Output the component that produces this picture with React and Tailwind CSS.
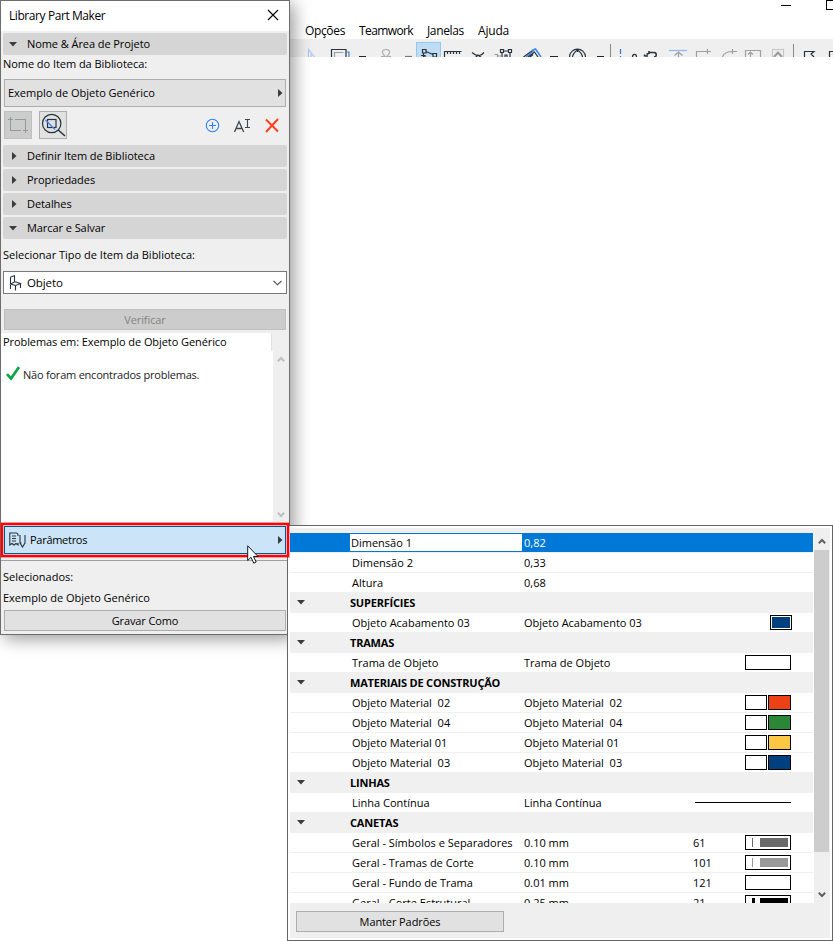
import React from "react";

const TriRight = ({ className = "" }) => (
  <svg width="5" height="8" viewBox="0 0 5 8" className={className}>
    <path d="M0 0 L4.5 4 L0 8 Z" fill="#3c3c3c" />
  </svg>
);

const TriDown = ({ className = "" }) => (
  <svg width="8" height="5" viewBox="0 0 8 5" className={className}>
    <path d="M0 0 H8 L4 4.5 Z" fill="#3c3c3c" />
  </svg>
);

const Chevron = ({ up, color }) => (
  <svg width="8" height="7" viewBox="0 0 8 7" className="block">
    <path d={up ? "M0.8 5.2 L4 2 L7.2 5.2" : "M0.8 1.8 L4 5 L7.2 1.8"} fill="none" stroke={color} strokeWidth="2" />
  </svg>
);

function Section({ title, open }) {
  return (
    <div className="mx-[2px] flex h-[22px] items-center rounded-[2px] bg-[#d5d5d5]">
      <span className="flex w-[24px] pl-[6px]">
        {open ? <TriDown /> : <TriRight className="ml-[3px]" />}
      </span>
      <span className="tracking-[-0.07px]">{title}</span>
    </div>
  );
}

function ToolbarIcons() {
  return (
    <svg width="543" height="18" viewBox="290 39 543 18" className="block" fill="none" stroke="#28333d" strokeWidth="1.2">
      <path d="M308.5 57 V49.5 L314.5 57 M311 57 V54" stroke="#a9c8f2" />
      <path d="M331.5 57 V49.5 H346 V57" />
      <path d="M334.5 57 V52.5 H343.5" stroke="#9a9fa4" />
      <path d="M347 52 H349 V57" stroke="#3f82e8" />
      <path d="M359 56.5 H366 M550 56.5 H558 M597 56.5 H604" stroke="#222" />
      <path d="M405 56.5 H412" stroke="#777" />
      <path d="M381 56.5 H385 C381 52.5 382 49.5 386 49.5 C390 49.5 391 52.5 387 56.5 H391" stroke="#a9adb1" />
      <rect x="416.5" y="42.5" width="24" height="18" fill="#c0dcf3" stroke="#90c8f6" strokeWidth="1" />
      <path d="M422.5 49.5 h3.5 v3.5 h-3.5z M433 53.5 h3.5 v3.5 h-3.5z M426 51.5 L433 54.5 M423.5 53 V57 M421 55.5 h4 V57" />
      <path d="M444.5 57 V51.5 H461.5 M447.5 51 v3 M450.5 51 v3 M453.5 51 v3 M456.5 51 v3 M459.5 51 v3" />
      <path d="M472 52.5 Q476 56 478.5 55.5 Q481 56 484 52.5 M475 58 L478 55 L482 58" />
      <path d="M500.5 49.5 h3 v3 h-3z M508.5 49.5 h3 v3 h-3z M503.5 51 H508.5 M502 52.5 V57 M510 52.5 V57 M505 57 v-2 h2 v2" />
      <path d="M494.5 54.5 h3 v3 M498 56 h3" stroke="#999" />
      <path d="M523.5 57 L532.5 50.5 M528 57 L534.5 52 L538 57 M530 57 L533 54.5" />
      <path d="M526 57 L534 50.5 M532 50.5 L535.5 49 L541 57" stroke="#3f82e8" strokeWidth="1.5" />
      <path d="M569.5 57 C570 46.5 585 46.5 585.5 57 M572.5 57 Q573 53 577.5 50 Q582 53 582.5 57 M577.5 50 V52" />
      <path d="M610.5 44 V57 M793.5 44 V57" stroke="#888" strokeWidth="1" />
      <path d="M620.5 49 v5 M620.5 56 v1" stroke="#2874e8" />
      <path d="M632.5 57 C632.5 53.5 636.5 53.5 636.5 57" />
      <path d="M645 56 h3 M646.5 54.5 L650 52.5 h4 c3 0 3 4.5 0 4.5 M649 51 v3 M644.5 54.5 v2" strokeWidth="1.5" />
      <path d="M669 50.5 H687" stroke="#8cb7f3" />
      <path d="M678.5 57 V52 M674.5 55.5 L678.5 52 L682.5 55.5 M696.5 57 V51.5 H711 M707.5 49 v5 M722.5 57 Q724 51.5 733 51.5 H737 M732.5 49 v5 M745.5 57 V50.5 H760.5 V57 M750.5 57 V52.5 M748 54.5 L750.5 52 L753 54.5" stroke="#9ba0a3" />
      <rect x="772.5" y="49.5" width="11" height="9" stroke="#c5c7c8" />
      <path d="M774 57 L778 52.5 L782 57" stroke="#969a9d" strokeWidth="2" />
      <path d="M804.5 57 V51.5 H814 L811 54 L814 57 M829.5 57 V51.5 H833" />
    </svg>
  );
}

function Background() {
  return (
    <div className="h-[941px] bg-white pl-[290px]">
      <div className="flex h-[39px] flex-col">
        <div className="flex h-[22px] justify-end">
          <svg width="53" height="12" viewBox="780 0 53 12" stroke="#000" fill="none" shapeRendering="crispEdges">
            <path d="M781 5.5 H791 M833 0.5 H826.5 V9.5 H833" />
          </svg>
        </div>
        <div className="flex h-[17px] items-center pl-[15px] pt-px text-[12px]">
          <span className="w-[54px] tracking-[-0.35px]">Opções</span>
          <span className="w-[68px] tracking-[-0.6px]">Teamwork</span>
          <span className="w-[51px] tracking-[-0.35px]">Janelas</span>
          <span className="tracking-[-0.2px]">Ajuda</span>
        </div>
      </div>
      <div className="h-[18px] bg-[#efefef]"><ToolbarIcons /></div>
    </div>
  );
}

function PartMaker() {
  return (
    <div className="absolute left-0 top-0 flex h-[635px] w-[290px] flex-col border border-[#6d6d6d] bg-[#efefef] shadow-[4px_4px_16px_rgba(0,0,0,0.4)]">
      <div className="flex h-[30px] items-center justify-between bg-white pl-[8px] pr-[10px] text-[12px]">
        <span className="tracking-[-0.42px]">Library Part Maker</span>
        <svg width="12" height="12" viewBox="0 0 12 12" stroke="#000" strokeWidth="1.1" className="-mt-[2px]"><path d="M1 1 L11 11 M11 1 L1 11" /></svg>
      </div>
      <div className="pt-[2px]"><Section title="Nome & Área de Projeto" open /></div>
      <div className="flex h-[18px] items-center pl-[2px] tracking-[-0.05px]">Nome do Item da Biblioteca:</div>
      <div className="mx-[3px] mt-[6px] flex h-[28px] items-center justify-between border border-[#adadad] bg-[#e1e1e1] pl-[3px] pr-[2px]">
        <span>Exemplo de Objeto Genérico</span>
        <TriRight />
      </div>
      <div className="flex h-[38px] items-start px-[3px] pt-[4px]">
        <span className="flex size-[28px] border border-[#bfbfbf] bg-[#cccccc]">
          <svg width="26" height="26" viewBox="0 0 26 26" fill="none" stroke="#93989b" shapeRendering="crispEdges">
            <path d="M10 7.5 H20.5 V16 M5.5 10 V18.5 H16 M3 7.5 H8 M5.5 5 V10 M18 18.5 H23 M20.5 16 V21" />
          </svg>
        </span>
        <span className="ml-[7px] flex size-[28px] border border-[#adadad] bg-[#e1e1e1]">
          <svg width="26" height="26" viewBox="0 0 26 26" fill="none" stroke="#28333d" strokeWidth="1.2">
            <circle cx="11.7" cy="11.5" r="9.2" />
            <rect x="7.5" y="7.5" width="8.5" height="8" />
            <path d="M18.3 18 L25 24" strokeWidth="1.5" />
            <path d="M5.5 8 L15 17.5" stroke="#3585f5" />
          </svg>
        </span>
        <svg width="76" height="20" viewBox="203 115 76 20" fill="none" className="ml-[136px] mt-[4px]">
          <circle cx="212.5" cy="125.5" r="6.2" stroke="#2f80ed" strokeWidth="1.1" />
          <path d="M212.5 122 V129 M209 125.5 H216" stroke="#2f80ed" strokeWidth="1.1" />
          <path d="M234.5 132 L239 121.5 L243.7 132 M236 128.5 H242" stroke="#3c4750" strokeWidth="1.3" />
          <path d="M245 119.5 H250 M245 127.5 H250 M247.5 119.5 V127.5" stroke="#3c4750" strokeWidth="1.1" />
          <path d="M266 119.5 L278 131.5 M278 119 L266 132" stroke="#ff3d1c" strokeWidth="1.9" />
        </svg>
      </div>
      <div className="flex flex-col gap-[2px]">
        <Section title="Definir Item de Biblioteca" />
        <Section title="Propriedades" />
        <Section title="Detalhes" />
        <Section title="Marcar e Salvar" open />
      </div>
      <div className="mt-[7px] flex h-[18px] items-center pl-[2px]">Selecionar Tipo de Item da Biblioteca:</div>
      <div className="mx-[2px] mt-[7px] flex h-[23px] items-center border border-[#7a7a7a] bg-white pl-[5px] pr-[4px]">
        <svg width="13" height="16" viewBox="0 0 13 16" fill="none" stroke="#28333d" strokeWidth="1.1">
          <path d="M1.5 14 V3 Q1.5 1.5 3 1.5 L5.5 0.8 V7 L1.5 9 L6.5 10.5 L11.5 8.5 L7 7 L5.5 7 M6.5 10.5 V15.5 M11.5 8.5 V13" />
        </svg>
        <span className="ml-[5px] flex-1 text-[11.5px] tracking-[-0.1px]">Objeto</span>
        <svg width="9" height="6" viewBox="0 0 9 6" fill="none" stroke="#444" strokeWidth="1.1"><path d="M0.5 0.8 L4.5 4.8 L8.5 0.8" /></svg>
      </div>
      <div className="mx-[3px] mt-[15px] flex h-[21px] items-center justify-center border border-[#bfbfbf] bg-[#cccccc] tracking-[-0.1px] text-[#838383]">Verificar</div>
      <div className="mt-[3px] flex h-[18px]">
        <div className="flex w-[271px] items-center border-r border-[#e0e0e0] bg-white pl-[2px] tracking-[-0.08px]">Problemas em: Exemplo de Objeto Genérico</div>
      </div>
      <div className="flex h-[171px]">
        <div className="w-[272px] bg-white pl-[5px] pt-[13px]">
          <div className="flex items-center">
            <svg width="14" height="15" viewBox="0 0 14 15" fill="none" stroke="#0da548" strokeWidth="2.7"><path d="M1 8.2 L5 12.5 L13 1" /></svg>
            <span className="ml-[3px] pt-[3px] text-[11px] tracking-[-0.22px] text-[#222]">Não foram encontrados problemas.</span>
          </div>
        </div>
        <div className="flex flex-1 flex-col items-center justify-between pb-[4px] pr-px pt-[5px]">
          <Chevron up color="#bfbfbf" />
          <Chevron color="#bfbfbf" />
        </div>
      </div>
      <div className="mx-[3px] mt-[4px] flex h-[28px] items-center border border-[#00559b] bg-[#cce4f7] pl-[4px] pr-[2px]">
        <svg width="17" height="16" viewBox="0 0 17 16" fill="none" stroke="#28333d" strokeWidth="1.1">
          <path d="M7 1 H0.8 V13 L3 11.5 L5 13 L7 11.5 L9 13 V11 M7 1 Q9 1 9 3 V4 M3 4 H7 M3 6.5 H7 M3 9 H7 M11 3 V11 L13.5 15 L16 11 V3 M11 11 H12.5" />
        </svg>
        <span className="ml-[4px] flex-1 tracking-[-0.28px]">Parâmetros</span>
        <TriRight />
      </div>
      <div className="mt-[6px] border-t border-[#a0a0a0]" />
      <div className="mt-[7px] flex h-[18px] items-center pl-[2px]">Selecionados:</div>
      <div className="mt-[3px] flex h-[18px] items-center pl-[2px]">Exemplo de Objeto Genérico</div>
      <div className="mx-[3px] mt-[3px] flex h-[21px] items-center justify-center border border-[#adadad] bg-[#e1e1e1] tracking-[-0.12px]">Gravar Como</div>
    </div>
  );
}

const rows = [
  { name: "Dimensão 1", value: "0,82", selected: true },
  { name: "Dimensão 2", value: "0,33" },
  { name: "Altura", value: "0,68" },
  { group: "SUPERFÍCIES" },
  { name: "Objeto Acabamento 03", value: "Objeto Acabamento 03", kind: "surface" },
  { group: "TRAMAS" },
  { name: "Trama de Objeto", value: "Trama de Objeto", kind: "box" },
  { group: "MATERIAIS DE CONSTRUÇÃO" },
  { name: "Objeto Material  02", value: "Objeto Material  02", kind: "material", color: "bg-[#ec4115]" },
  { name: "Objeto Material  04", value: "Objeto Material  04", kind: "material", color: "bg-[#2b8735]" },
  { name: "Objeto Material 01", value: "Objeto Material 01", kind: "material", color: "bg-[#fbc744]" },
  { name: "Objeto Material  03", value: "Objeto Material  03", kind: "material", color: "bg-[#00407f]" },
  { group: "LINHAS" },
  { name: "Linha Contínua", value: "Linha Contínua", kind: "line" },
  { group: "CANETAS" },
  { name: "Geral - Símbolos e Separadores", value: "0.10 mm", num: "61", kind: "pen", color: "bg-[#6a6a6a]", thin: "w-px" },
  { name: "Geral - Tramas de Corte", value: "0.10 mm", num: "101", kind: "pen", color: "bg-[#999999]", thin: "w-px" },
  { name: "Geral - Fundo de Trama", value: "0.01 mm", num: "121", kind: "box" },
  { name: "Geral - Corte Estrutural", value: "0.25 mm", num: "21", kind: "pen", color: "bg-black", thin: "w-[3px]" },
];

function Swatch({ kind, color, thin }) {
  if (kind === "surface")
    return <span className="-mr-px flex h-[15px] w-[22px] border border-black bg-white p-px"><span className="flex-1 bg-[#00407f]" /></span>;
  if (kind === "box") return <span className="h-[15px] w-[46px] border border-black bg-white" />;
  if (kind === "line") return <span className="w-[96px] border-t border-black" />;
  if (kind === "material")
    return (
      <span className="flex gap-px">
        <span className="h-[15px] w-[22px] border border-black bg-white" />
        <span className={"h-[15px] w-[23px] border border-black " + color} />
      </span>
    );
  if (kind === "pen")
    return (
      <span className="flex h-[15px] w-[46px] items-center justify-between border border-black bg-white pl-[6px] pr-[2px]">
        <span className={"h-[9px] " + thin + " " + color} />
        <span className={"h-[9px] w-[28px] " + color} />
      </span>
    );
  return null;
}

function Row({ row }) {
  if (row.group)
    return (
      <div className="flex h-[20px] shrink-0 items-center bg-[#f0f0f0]">
        <span className="flex w-[60px] pb-px pl-[7px]"><TriDown /></span>
        <span className="font-bold tracking-[-0.2px]">{row.group}</span>
      </div>
    );
  return (
    <div className={"flex h-[20px] shrink-0 items-center border-b border-[#f0f0f0] " + (row.selected ? "bg-[#0078d7]" : "")}>
      <span className="w-[60px]" />
      {row.selected ? (
        <span className="flex h-[17px] w-[172px] items-center bg-white pl-px">{row.name}</span>
      ) : (
        <span className="w-[172px] whitespace-pre pl-[2px]">{row.name}</span>
      )}
      <span className={"w-[169px] whitespace-pre pl-[2px] " + (row.selected ? "text-white" : "")}>{row.value}</span>
      <span className="flex w-[100px] items-center pl-[2px]">
        <span>{row.num}</span>
        <span className="flex flex-1 justify-end"><Swatch {...row} /></span>
      </span>
    </div>
  );
}

function Parameters() {
  return (
    <div className="absolute left-[287px] top-[525px] flex h-[416px] w-[546px] border border-[#666] bg-white p-[2px]">
      <div className="flex flex-1 flex-col bg-[#efefef]">
        <div className="mt-[5px] flex h-[370px]">
          <div className="flex w-[524px] flex-col overflow-hidden border-r border-white bg-white">
            {rows.map((row, i) => <Row key={i} row={row} />)}
          </div>
          <div className="flex w-[15px] flex-col items-center">
            <div className="flex h-[17px] items-center"><Chevron up color="#606060" /></div>
            <div className="h-[302px] w-full bg-[#cdcdcd]" />
            <div className="mt-[39px]"><Chevron color="#606060" /></div>
          </div>
        </div>
        <div className="ml-[6px] mt-[8px] flex h-[21px] w-[208px] items-center justify-center border border-[#adadad] bg-[#e1e1e1] tracking-[-0.1px]">Manter Padrões</div>
      </div>
    </div>
  );
}

export default function App() {
  return (
    <div className="relative h-[941px] w-[833px] overflow-hidden whitespace-nowrap font-['Open_Sans','Noto_Sans',sans-serif] text-[11px] leading-[16px] text-black">
      <Background />
      <PartMaker />
      <Parameters />
      {/* Red highlight around the active Parâmetros button */}
      <div className="absolute left-px top-[523px] h-[34px] w-[288px] border-2 border-[#fb0207] shadow-[0_0_0_1px_rgba(255,0,0,0.35),inset_0_0_0_1px_rgba(255,0,0,0.25)]" />
      <svg width="14" height="20" viewBox="0 0 14 20" className="absolute left-[247px] top-[545px]">
        <path d="M0.7 0.8 V15.5 L4 12.3 L6.8 18.2 L9.2 17 L6.5 11.5 H11 Z" fill="#fff" stroke="#111827" strokeWidth="1" />
      </svg>
    </div>
  );
}
